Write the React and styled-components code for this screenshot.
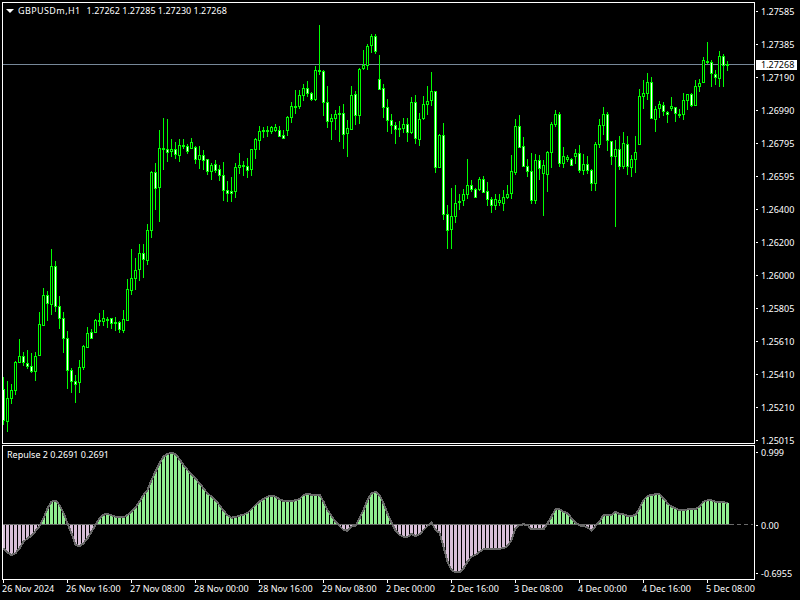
import React from "react";
import styled, { createGlobalStyle } from "styled-components";

const GlobalStyle = createGlobalStyle`
  html, body {
    margin: 0;
    padding: 0;
    background: #000;
  }
`;

// candle data, in 1/3 px: wick top, body top, body bottom, wick low, white body
const EARLY = [
  [530, 568, 662, 675, 1], [543, 595, 665, 695, 0], [552, 571, 596, 612, 0], [483, 487, 572, 585, 0],
  [417, 469, 488, 488, 0], [455, 469, 488, 497, 1], [450, 490, 500, 507, 1], [460, 499, 515, 518, 1],
  [457, 469, 515, 543, 0], [336, 373, 467, 467, 0], [264, 286, 377, 377, 0], [273, 286, 311, 362, 1],
  [148, 199, 314, 345, 0], [183, 199, 320, 335, 1], [288, 319, 356, 387, 1], [336, 355, 416, 459, 1],
  [393, 415, 512, 567, 1], [505, 511, 545, 579, 1], [525, 544, 554, 608, 1], [480, 502, 548, 578, 0],
  [435, 439, 503, 509, 0], [381, 400, 443, 444, 0], [388, 397, 416, 416, 1], [358, 361, 398, 398, 0],
  [339, 361, 366, 378, 0], [330, 355, 365, 378, 0], [351, 357, 359, 384, 0], [354, 355, 371, 387, 1],
  [351, 366, 371, 392, 0], [363, 367, 389, 398, 1], [330, 358, 392, 398, 0], [237, 268, 362, 362, 0],
  [148, 235, 272, 285, 0], [175, 211, 236, 270, 0], [132, 160, 209, 242, 0], [132, 160, 179, 233, 1],
  [72, 91, 182, 194, 0],
].map(([a, b, c, d, f]) => [a + 600, b + 600, c + 600, d + 600, f]);

const LATER = [
  [513, 516, 692, 713, 0], [489, 517, 566, 630, 1], [390, 444, 563, 666, 0], [354, 444, 450, 510, 0],
  [357, 448, 458, 486, 1], [417, 447, 455, 470, 0], [426, 447, 464, 477, 1], [417, 435, 468, 486, 0],
  [417, 435, 441, 447, 1], [432, 438, 456, 462, 1], [414, 426, 447, 447, 0], [438, 441, 480, 492, 1],
  [438, 465, 480, 507, 0], [450, 465, 483, 510, 1], [477, 477, 516, 525, 1], [489, 495, 516, 540, 0],
  [480, 492, 513, 520, 1], [495, 507, 528, 543, 1], [486, 525, 572, 603, 1], [543, 570, 582, 606, 1],
  [531, 573, 582, 606, 1], [489, 501, 575, 593, 0], [459, 495, 504, 522, 0], [483, 495, 501, 528, 0],
  [474, 498, 513, 534, 1], [447, 447, 510, 528, 0], [414, 417, 450, 477, 0], [378, 393, 423, 450, 0],
  [381, 390, 396, 414, 0], [378, 390, 396, 411, 0], [378, 381, 396, 402, 0], [372, 381, 393, 396, 0],
  [378, 390, 411, 411, 1], [390, 405, 417, 417, 1], [348, 351, 393, 408, 0], [306, 318, 354, 369, 0],
  [270, 318, 321, 342, 0], [270, 285, 321, 327, 0], [252, 264, 288, 303, 0], [243, 264, 282, 291, 1],
  [276, 279, 300, 303, 1], [198, 210, 300, 303, 0], [75, 210, 216, 225, 0], [210, 213, 309, 348, 1],
  [258, 306, 366, 384, 1], [342, 354, 366, 420, 0], [330, 342, 357, 390, 0], [318, 339, 342, 426, 0],
  [312, 339, 405, 447, 1], [360, 384, 402, 471, 0], [258, 285, 390, 390, 0], [273, 282, 348, 375, 1],
  [204, 207, 348, 372, 0], [150, 195, 207, 210, 0], [132, 138, 198, 210, 0], [102, 108, 138, 159, 0],
  [102, 108, 156, 162, 1], [165, 237, 270, 270, 1], [252, 264, 324, 354, 1], [297, 321, 363, 396, 1],
  [342, 360, 378, 402, 1], [366, 375, 390, 432, 1], [363, 384, 390, 411, 0], [354, 372, 387, 399, 0],
  [354, 372, 399, 426, 1], [291, 306, 399, 402, 0], [285, 306, 417, 432, 1], [339, 357, 420, 438, 0],
  [288, 312, 357, 360, 0], [258, 303, 315, 345, 0], [216, 273, 303, 318, 0], [273, 273, 504, 519, 1],
  [402, 405, 504, 504, 0], [369, 405, 645, 660, 1], [615, 642, 693, 747, 1], [564, 648, 690, 747, 0],
  [555, 609, 651, 669, 0], [582, 603, 609, 630, 0], [567, 582, 603, 618, 0], [477, 555, 585, 597, 0],
  [540, 555, 570, 576, 1], [564, 567, 594, 594, 1], [531, 537, 570, 573, 0], [528, 537, 579, 579, 1],
  [546, 573, 600, 618, 1], [591, 597, 618, 639, 1], [582, 597, 618, 630, 0], [582, 600, 609, 618, 0],
  [570, 591, 612, 633, 0], [555, 582, 594, 597, 0], [465, 513, 582, 597, 0], [357, 378, 519, 525, 0],
  [345, 378, 444, 444, 1], [411, 438, 501, 501, 1], [477, 498, 516, 531, 1], [459, 513, 603, 612, 1],
  [462, 480, 603, 612, 0], [465, 480, 507, 540, 1], [480, 495, 522, 648, 0], [453, 456, 525, 576, 0],
  [366, 372, 459, 504, 0], [330, 342, 375, 381, 0], [336, 342, 492, 501, 1], [441, 468, 492, 504, 0],
  [465, 472, 480, 486, 0], [474, 477, 498, 498, 1], [447, 459, 471, 492, 0], [435, 459, 513, 519, 1],
  [462, 492, 513, 525, 0], [468, 492, 513, 522, 1], [507, 510, 552, 573, 1], [426, 432, 552, 573, 0],
  [357, 375, 435, 444, 0], [321, 342, 378, 405, 0], [336, 342, 423, 453, 1], [423, 423, 471, 495, 1],
  [420, 447, 471, 681, 0], [408, 447, 501, 510, 1], [396, 429, 501, 507, 0], [408, 432, 501, 525, 1],
  [465, 477, 504, 531, 0], [408, 456, 480, 520, 0], [267, 288, 435, 435, 0], [240, 279, 291, 327, 0],
  [219, 246, 282, 300, 0], [231, 246, 357, 357, 1], [318, 327, 360, 396, 0], [303, 312, 327, 354, 0],
  [306, 315, 336, 348, 1], [333, 336, 345, 369, 1], [291, 318, 327, 333, 0], [321, 321, 342, 366, 1],
  [327, 342, 348, 354, 0], [279, 300, 345, 360, 0], [282, 282, 303, 330, 0], [279, 282, 318, 321, 1],
  [240, 258, 318, 318, 0], [237, 249, 261, 276, 0], [171, 180, 249, 249, 0], [126, 183, 189, 192, 0],
  [180, 186, 222, 261, 1], [210, 222, 234, 255, 1], [153, 168, 237, 261, 0], [162, 168, 198, 261, 1],
  [183, 192, 198, 213, 0],
];

const CANDLES = [...EARLY, ...LATER];

// indicator line, in 1/3 px below y=440; 253 is the zero level
const REPULSE = [
  325, 337, 345, 340, 325, 305, 295, 287, 273, 258, 235, 205, 185, 182, 195, 218, 250, 280, 315, 318,
  310, 295, 275, 255, 235, 224, 222, 226, 230, 232, 232, 225, 215, 202, 185, 165, 150, 120, 95, 70,
  50, 42, 38, 43, 58, 75, 90, 103, 116, 130, 145, 160, 170, 182, 195, 212, 226, 233, 231, 227,
  224, 219, 207, 195, 185, 177, 170, 167, 170, 178, 183, 183, 183, 181, 177, 165, 162, 164, 164, 164,
  185, 210, 228, 245, 258, 270, 272, 260, 257, 235, 210, 180, 160, 156, 165, 190, 220, 248, 272, 285,
  290, 291, 282, 288, 283, 270, 258, 247, 270, 278, 320, 365, 390, 397, 397, 385, 365, 350, 345, 335,
  328, 328, 327, 327, 326, 325, 318, 300, 265, 255, 253, 255, 268, 268, 268, 268, 250, 230, 207, 208,
  215, 220, 235, 248, 256, 258, 262, 272, 258, 245, 225, 225, 225, 216, 222, 223, 228, 228, 225, 205,
  180, 168, 165, 163, 162, 175, 190, 200, 205, 211, 211, 208, 207, 207, 200, 185, 181, 181, 185, 185,
  186, 190,
];

const PRICES = [
  "1.27585", "1.27385", "1.27190", "1.26990", "1.26795", "1.26595", "1.26400",
  "1.26200", "1.26000", "1.25805", "1.25610", "1.25410", "1.25210", "1.25015",
];

const TIMES = [
  "26 Nov 2024", "26 Nov 16:00", "27 Nov 08:00", "28 Nov 00:00", "28 Nov 16:00", "29 Nov 08:00",
  "2 Dec 00:00", "2 Dec 16:00", "3 Dec 08:00", "4 Dec 00:00", "4 Dec 16:00", "5 Dec 08:00",
];

const Page = styled.div`
  width: 800px;
  height: 600px;
  box-sizing: border-box;
  padding: 2px 0 0 2px;
  overflow: hidden;
  background: #000;
  color: #fff;
  font-family: "Noto Sans", "Liberation Sans", Arial, sans-serif;
  font-size: 9px;
  line-height: 11px;
`;

const Row = styled.div`
  display: flex;
  height: ${(p) => p.$height}px;
  margin-bottom: ${(p) => p.$after || 0}px;
`;

const Pane = styled.div`
  position: relative;
  width: 753px;
  flex: none;
  box-sizing: border-box;
  border: 1px solid #fff;
  overflow: hidden;
`;

const PaneSvg = styled.svg`
  display: block;
  width: 751px;
  height: 100%;
  shape-rendering: crispEdges;
`;

const PaneTitle = styled.div`
  position: absolute;
  left: ${(p) => p.$left}px;
  top: ${(p) => p.$top}px;
  display: flex;
  align-items: center;
  white-space: pre;
`;

const DownArrow = styled.span`
  width: 0;
  height: 0;
  margin-right: 4px;
  border-left: 4px solid transparent;
  border-right: 4px solid transparent;
  border-top: 4px solid #fff;
`;

const Symbol = styled.span`
  margin-right: 6px;
  letter-spacing: 0.4px;
`;

const Scale = styled.div`
  position: relative;
  flex: 1;
  display: flex;
  flex-direction: column;
  padding-top: ${(p) => p.$pad}px;
`;

const ScaleLabel = styled.div`
  position: relative;
  height: 11px;
  flex: none;
  padding-left: 6px;
  margin-bottom: ${(p) => p.$gap}px;
  white-space: nowrap;
`;

const ScaleTick = styled.span`
  position: absolute;
  left: 1px;
  top: 5px;
  width: 2px;
  height: 1px;
  background: #fff;
`;

const PriceTag = styled.div`
  position: absolute;
  left: 1px;
  top: 58px;
  width: 41px;
  height: 10px;
  line-height: 10px;
  padding-left: 5px;
  box-sizing: border-box;
  background: #fff;
  color: #000;
`;

const TimeAxis = styled.div`
  display: flex;
`;

const TimeCell = styled.div`
  position: relative;
  width: 64px;
  flex: none;
  box-sizing: border-box;
  padding-top: 3px;
  white-space: nowrap;

  &::before {
    content: "";
    position: absolute;
    left: 1px;
    top: 0;
    width: 1px;
    height: 3px;
    background: #fff;
  }
`;

function Candles() {
  return CANDLES.map(([high, top, bottom, low, white], i) => {
    const x = 3 + 4 * i;
    const y1 = Math.round(top / 3);
    const y2 = Math.max(Math.round(bottom / 3), y1 + 2);
    const wickTop = Math.round(high / 3);
    const wickEnd = Math.round(low / 3);
    return (
      <g key={i}>
        <rect x={x} y={wickTop} width="1" height={wickEnd - wickTop} fill="#00ff00" />
        <rect x={x - 1} y={y1} width="3" height={y2 - y1} fill="#00ff00" />
        {y2 - y1 > 2 && (
          <rect x={x} y={y1 + 1} width="1" height={y2 - y1 - 2} fill={white ? "#fff" : "#000"} />
        )}
      </g>
    );
  });
}

function Histogram() {
  const zero = 524;
  const toY = (v) => 440 + v / 3;
  const points = REPULSE.map((v, i) => `${3.5 + 4 * i},${toY(v)}`).join(" ");
  return (
    <>
      {REPULSE.map((v, i) => {
        const y = Math.round(toY(v));
        const up = y < zero;
        return (
          <rect
            key={i}
            x={2 + 4 * i}
            y={up ? y : zero}
            width="3"
            height={Math.abs(y - zero)}
            fill={up ? "#90ee90" : "#d8bfd8"}
          />
        );
      })}
      <line x1="3" x2="730" y1="524.5" y2="524.5" stroke="#696969" />
      <line x1="730" x2="753" y1="524.5" y2="524.5" stroke="#696969" strokeDasharray="4 3" />
      <polyline points={points} fill="none" stroke="#696969" strokeWidth="2" />
    </>
  );
}

export default function App() {
  return (
    <Page>
      <GlobalStyle />
      <Row $height={442} $after={1}>
        <Pane>
          <PaneSvg viewBox="3 3 751 440">
            <line x1="3" x2="754" y1="64.5" y2="64.5" stroke="#778899" />
            <Candles />
          </PaneSvg>
          <PaneTitle $left={3} $top={2}>
            <DownArrow />
            <Symbol>GBPUSDm,H1</Symbol>
            <span>1.27262 1.27285 1.27230 1.27268</span>
          </PaneTitle>
        </Pane>
        <Scale $pad={3.5}>
          {PRICES.map((p) => (
            <ScaleLabel key={p} $gap={22}>
              <ScaleTick />
              {p}
            </ScaleLabel>
          ))}
          <PriceTag>1.27268</PriceTag>
        </Scale>
      </Row>
      <Row $height={135}>
        <Pane>
          <PaneSvg viewBox="3 446 751 133">
            <Histogram />
          </PaneSvg>
          <PaneTitle $left={4} $top={3}>
            Repulse 2 0.2691 0.2691
          </PaneTitle>
        </Pane>
        <Scale $pad={1.5}>
          <ScaleLabel $gap={62}>
            <ScaleTick />
            0.999
          </ScaleLabel>
          <ScaleLabel $gap={37}>
            <ScaleTick />
            0.00
          </ScaleLabel>
          <ScaleLabel $gap={0}>
            <ScaleTick />
            -0.6955
          </ScaleLabel>
        </Scale>
      </Row>
      <TimeAxis>
        {TIMES.map((t) => (
          <TimeCell key={t}>{t}</TimeCell>
        ))}
      </TimeAxis>
    </Page>
  );
}
